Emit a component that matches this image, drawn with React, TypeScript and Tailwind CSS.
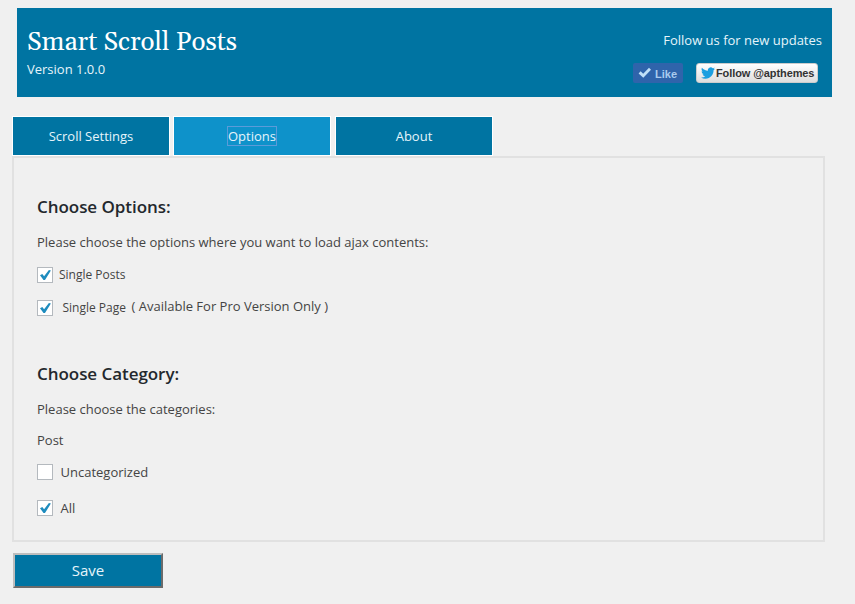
import React from 'react';

function Check({ checked = false }: { checked?: boolean }) {
  return (
    <span className="flex h-4 w-4 shrink-0 items-center justify-center border border-[#b4b9be] bg-white">
      {checked && (
        <svg viewBox="0 0 14 14" className="h-[14px] w-[14px]">
          <path d="M2 7.2 L4.3 6 L6.1 8.3 L10.9 2 L12.9 2.6 L7 12 L5.5 12 Z" fill="#1e8cbe" />
        </svg>
      )}
    </span>
  );
}

function Tab({ label, active = false }: { label: string; active?: boolean }) {
  return (
    <button
      className={`flex h-10 w-[158px] items-center justify-center border border-white text-[13px] text-[#e6f4fb] ${
        active ? 'bg-[#0e92ca]' : 'bg-[#0074a2]'
      }`}
    >
      {active ? (
        <span className="-mt-px h-5 w-[50px] border border-[#5b9bd9] text-center leading-[18px]">{label}</span>
      ) : (
        <span className="pt-px">{label}</span>
      )}
    </button>
  );
}

export default function App() {
  return (
    <div className="h-[604px] w-[855px] overflow-hidden bg-[#f0f0f0] pt-2 font-['Open_Sans',sans-serif] text-[13px] text-[#444]">
      <header className="ml-[17px] flex h-[89px] w-[815px] justify-between bg-[#0074a2] px-[10px] text-white">
        <div className="pt-[18px]">
          <h1 className="h-8 whitespace-nowrap font-['Gelasio','Georgia','Liberation_Serif',serif] text-[26px] leading-[33px]">
            Smart Scroll Posts
          </h1>
          <p className="mt-px leading-5 text-[#e6f4fb]">Version 1.0.0</p>
        </div>
        <div className="flex flex-col items-end pt-[22px]">
          <p className="leading-5 text-[#e6f4fb]">Follow us for new updates</p>
          <div className="mr-1 mt-[13px] flex gap-[13px] font-['Liberation_Sans',sans-serif] text-[11px] font-bold">
            <button className="flex h-5 w-[50px] items-center rounded-[2px] bg-[#2f64ab] pl-[5px] text-[#a9cbee]">
              <svg viewBox="0 0 14 12" className="mr-[3px] h-3 w-[14px]">
                <path d="M0.6 6.4 L2.6 4.2 L5.2 6.8 L11 0.8 L13 2.8 L5.3 10.8 Z" fill="#bfe0f7" />
              </svg>
              <span className="pt-[2px]">Like</span>
            </button>
            <button className="flex h-5 w-[122px] items-center whitespace-nowrap rounded-[3px] border border-[#ccc] bg-linear-to-b from-white to-[#dedede] pl-[4px] text-[#333]">
              <svg viewBox="0 0 24 24" className="mr-px h-[14px] w-[14px] shrink-0">
                <path
                  fill="#1b9fe0"
                  d="M23.95 4.57a10 10 0 0 1-2.82.77 4.96 4.96 0 0 0 2.16-2.72c-.95.55-2 .95-3.13 1.18a4.92 4.92 0 0 0-8.38 4.48C7.69 8.1 4.07 6.13 1.64 3.16a4.82 4.82 0 0 0-.67 2.48c0 1.71.87 3.21 2.19 4.1a4.9 4.9 0 0 1-2.23-.62v.06a4.92 4.92 0 0 0 3.95 4.83 5 5 0 0 1-2.21.08 4.94 4.94 0 0 0 4.6 3.42A9.87 9.87 0 0 1 0 19.54a14 14 0 0 0 7.55 2.21c9.05 0 14-7.5 14-13.98 0-.21 0-.42-.02-.63a9.94 9.94 0 0 0 2.42-2.57z"
                />
              </svg>
              <span className="tracking-[-0.1px]">Follow @apthemes</span>
            </button>
          </div>
        </div>
      </header>

      <nav className="ml-3 mt-[19px] flex">
        <Tab label="Scroll Settings" />
        <div className="ml-[3px] mr-1">
          <Tab label="Options" active />
        </div>
        <Tab label="About" />
      </nav>

      <main className="ml-3 h-[386px] w-[813px] border-2 border-[#e1e1e1] pl-[23px] pt-9">
        <h2 className="text-[17px] font-semibold leading-[26px] tracking-[-0.05px] text-[#23282d]">Choose Options:</h2>
        <p className="mt-3 leading-5">Please choose the options where you want to load ajax contents:</p>
        <label className="mt-[15px] flex h-4 items-center">
          <Check checked />
          <span className="ml-[6px] text-[12px]">Single Posts</span>
        </label>
        <div className="mt-[17px] flex h-4 items-center">
          <Check checked />
          <span className="ml-[9.5px] text-[12px]">Single Page</span>
          <span className="-mt-[3px] ml-[5.5px]">( Available For Pro Version Only )</span>
        </div>

        <h2 className="mt-[45px] text-[17px] font-semibold leading-[26px] tracking-[-0.05px] text-[#23282d]">
          Choose Category:
        </h2>
        <p className="mt-3 leading-5">Please choose the categories:</p>
        <p className="mt-[11px] leading-5">Post</p>
        <label className="mt-[14px] flex h-4 items-center">
          <Check />
          <span className="ml-[7.5px] pt-[2px]">Uncategorized</span>
        </label>
        <label className="mt-5 flex h-4 items-center">
          <Check checked />
          <span className="ml-[7.5px] pt-[2px]">All</span>
        </label>
      </main>

      <button className="ml-[13px] mt-[11px] flex h-[35px] w-[150px] items-center justify-center border-2 border-b-[#6b6b6b] border-l-[#bdbdbd] border-r-[#6b6b6b] border-t-[#bdbdbd] bg-[#0074a2] text-[15px] text-[#e6f4fb]">
        Save
      </button>
    </div>
  );
}
